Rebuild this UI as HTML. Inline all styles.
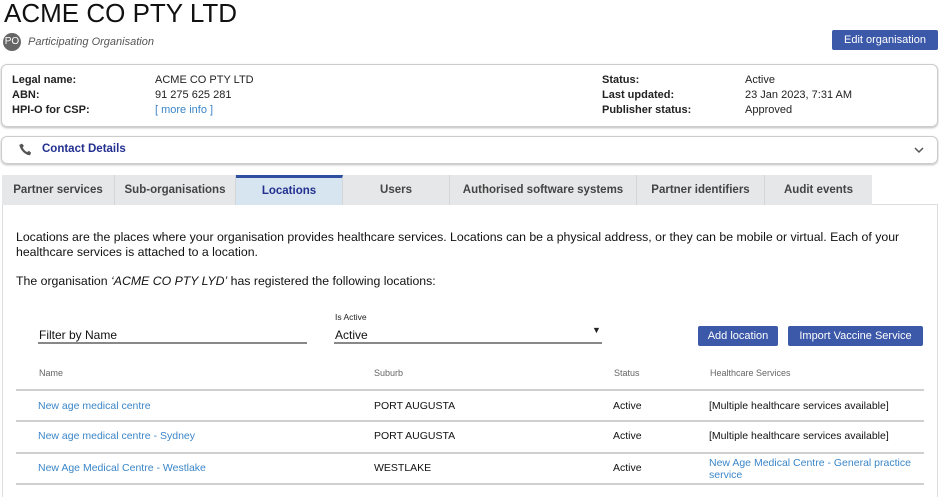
<!DOCTYPE html><html><head><style>
*{margin:0;padding:0;box-sizing:border-box}
body{width:939px;height:497px;background:#fff;font-family:"Liberation Sans",sans-serif;position:relative;overflow:hidden;color:#222}
.a{position:absolute;white-space:nowrap}
.lb{font-size:11px;font-weight:bold;color:#222}
.v{font-size:11px;color:#222}
.tab{position:absolute;top:175px;height:30px;background:#e6e7e8;border-right:1px solid #d4d5d6;font-size:11.5px;font-weight:bold;color:#444;text-align:center;line-height:31px}
.btn{position:absolute;background:#3b58a9;color:#fff;font-size:11px;text-align:center;border-radius:2px;line-height:20px}
.th{font-size:9px;color:#666}
.td{font-size:10.5px;color:#111}
.lk{font-size:10.5px;color:#3b86c8}
.hl{position:absolute;left:16px;width:908px;height:2px;background:#d0d0d0}
</style></head><body>
<div class="a" style="left:4px;top:-2px;font-size:26px;color:#111">ACME CO PTY LTD</div>
<div class="a" style="left:3px;top:33px;width:18px;height:18px;border-radius:50%;background:#666;color:#fff;font-size:10px;line-height:18px;text-align:center">PO</div>
<div class="a" style="left:28px;top:36px;font-size:11px;font-style:italic;color:#555">Participating Organisation</div>
<div class="btn" style="left:832px;top:30px;width:106px;height:20px">Edit organisation</div>

<div class="a" style="left:1px;top:64px;width:937px;height:63px;border:1px solid #ccc;border-radius:6px;box-shadow:0 1px 2px #bbb"></div>
<div class="a lb" style="left:12px;top:74px">Legal name:</div>
<div class="a lb" style="left:12px;top:89px">ABN:</div>
<div class="a lb" style="left:12px;top:104px">HPI-O for CSP:</div>
<div class="a v" style="left:155px;top:74px">ACME CO PTY LTD</div>
<div class="a v" style="left:155px;top:89px">91 275 625 281</div>
<div class="a v" style="left:155px;top:104px;color:#3b86c8">[ more info ]</div>
<div class="a lb" style="left:602px;top:74px">Status:</div>
<div class="a lb" style="left:602px;top:89px">Last updated:</div>
<div class="a lb" style="left:602px;top:104px">Publisher status:</div>
<div class="a v" style="left:745px;top:74px">Active</div>
<div class="a v" style="left:745px;top:89px">23 Jan 2023, 7:31 AM</div>
<div class="a v" style="left:745px;top:104px">Approved</div>

<div class="a" style="left:1px;top:136px;width:937px;height:28px;border:1px solid #ccc;border-radius:6px;box-shadow:0 1px 2px #bbb"></div>
<svg class="a" style="left:17px;top:142px" width="17" height="16" viewBox="0 0 24 24"><path fill="#555" d="M6.6 2.5l3 3.2-1.8 2.6c1.3 3 3.6 5.4 6.7 6.8l2.6-1.9 3.3 3-1.6 3.6C12 20 4 12 2.8 4.3z"/></svg>
<div class="a" style="left:42px;top:143px;font-size:11.5px;font-weight:bold;color:#23308f">Contact Details</div>
<svg class="a" style="left:914px;top:146px" width="10" height="8"><path d="M1 2l4 4 4-4" stroke="#555" stroke-width="1.5" fill="none"/></svg>

<div class="a" style="left:2px;top:204px;width:936px;height:293px;border:1px solid #ddd;border-bottom:none"></div>
<div class="tab" style="left:2px;width:113px">Partner services</div>
<div class="tab" style="left:115px;width:121px">Sub-organisations</div>
<div class="tab" style="left:236px;width:107px;background:#d6e5f0;border-top:3px solid #2e4ea0;line-height:26px;color:#23308f">Locations</div>
<div class="tab" style="left:343px;width:107px">Users</div>
<div class="tab" style="left:450px;width:187px">Authorised software systems</div>
<div class="tab" style="left:637px;width:128px">Partner identifiers</div>
<div class="tab" style="left:765px;width:107px;border-right:none">Audit events</div>

<div class="a" style="left:16px;top:230px;font-size:12.3px;line-height:15px;color:#111;white-space:normal;width:920px">Locations are the places where your organisation provides healthcare services. Locations can be a physical address, or they can be mobile or virtual. Each of your healthcare services is attached to a location.</div>
<div class="a" style="left:16px;top:274px;font-size:12.3px;color:#111">The organisation <i>‘ACME CO PTY LYD’</i> has registered the following locations:</div>

<div class="a" style="left:39px;top:328px;font-size:12px;color:#111">Filter by Name</div>
<div class="a" style="left:38px;top:342px;width:269px;height:2px;background:#888"></div>
<div class="a" style="left:335px;top:312px;font-size:8.5px;color:#222">Is Active</div>
<div class="a" style="left:335px;top:328px;font-size:12px;color:#111">Active</div>
<div class="a" style="left:592px;top:325px;font-size:9px;color:#222">▼</div>
<div class="a" style="left:334px;top:342px;width:268px;height:2px;background:#888"></div>
<div class="btn" style="left:698px;top:326px;width:80px;height:20px">Add location</div>
<div class="btn" style="left:788px;top:326px;width:135px;height:20px">Import Vaccine Service</div>

<div class="a th" style="left:39px;top:368px">Name</div>
<div class="a th" style="left:374px;top:368px">Suburb</div>
<div class="a th" style="left:614px;top:368px">Status</div>
<div class="a th" style="left:710px;top:368px">Healthcare Services</div>
<div class="hl" style="top:389px"></div>
<div class="a lk" style="left:38px;top:400px">New age medical centre</div>
<div class="a td" style="left:374px;top:400px">PORT AUGUSTA</div>
<div class="a td" style="left:613px;top:400px">Active</div>
<div class="a td" style="left:709px;top:400px">[Multiple healthcare services available]</div>
<div class="hl" style="top:420px"></div>
<div class="a lk" style="left:38px;top:430px">New age medical centre - Sydney</div>
<div class="a td" style="left:374px;top:430px">PORT AUGUSTA</div>
<div class="a td" style="left:613px;top:430px">Active</div>
<div class="a td" style="left:709px;top:430px">[Multiple healthcare services available]</div>
<div class="hl" style="top:452px"></div>
<div class="a lk" style="left:38px;top:462px">New Age Medical Centre - Westlake</div>
<div class="a td" style="left:374px;top:462px">WESTLAKE</div>
<div class="a td" style="left:613px;top:462px">Active</div>
<div class="a lk" style="left:709px;top:457px;line-height:12px">New Age Medical Centre - General practice<br>service</div>
<div class="hl" style="top:483px"></div>
</body></html>
